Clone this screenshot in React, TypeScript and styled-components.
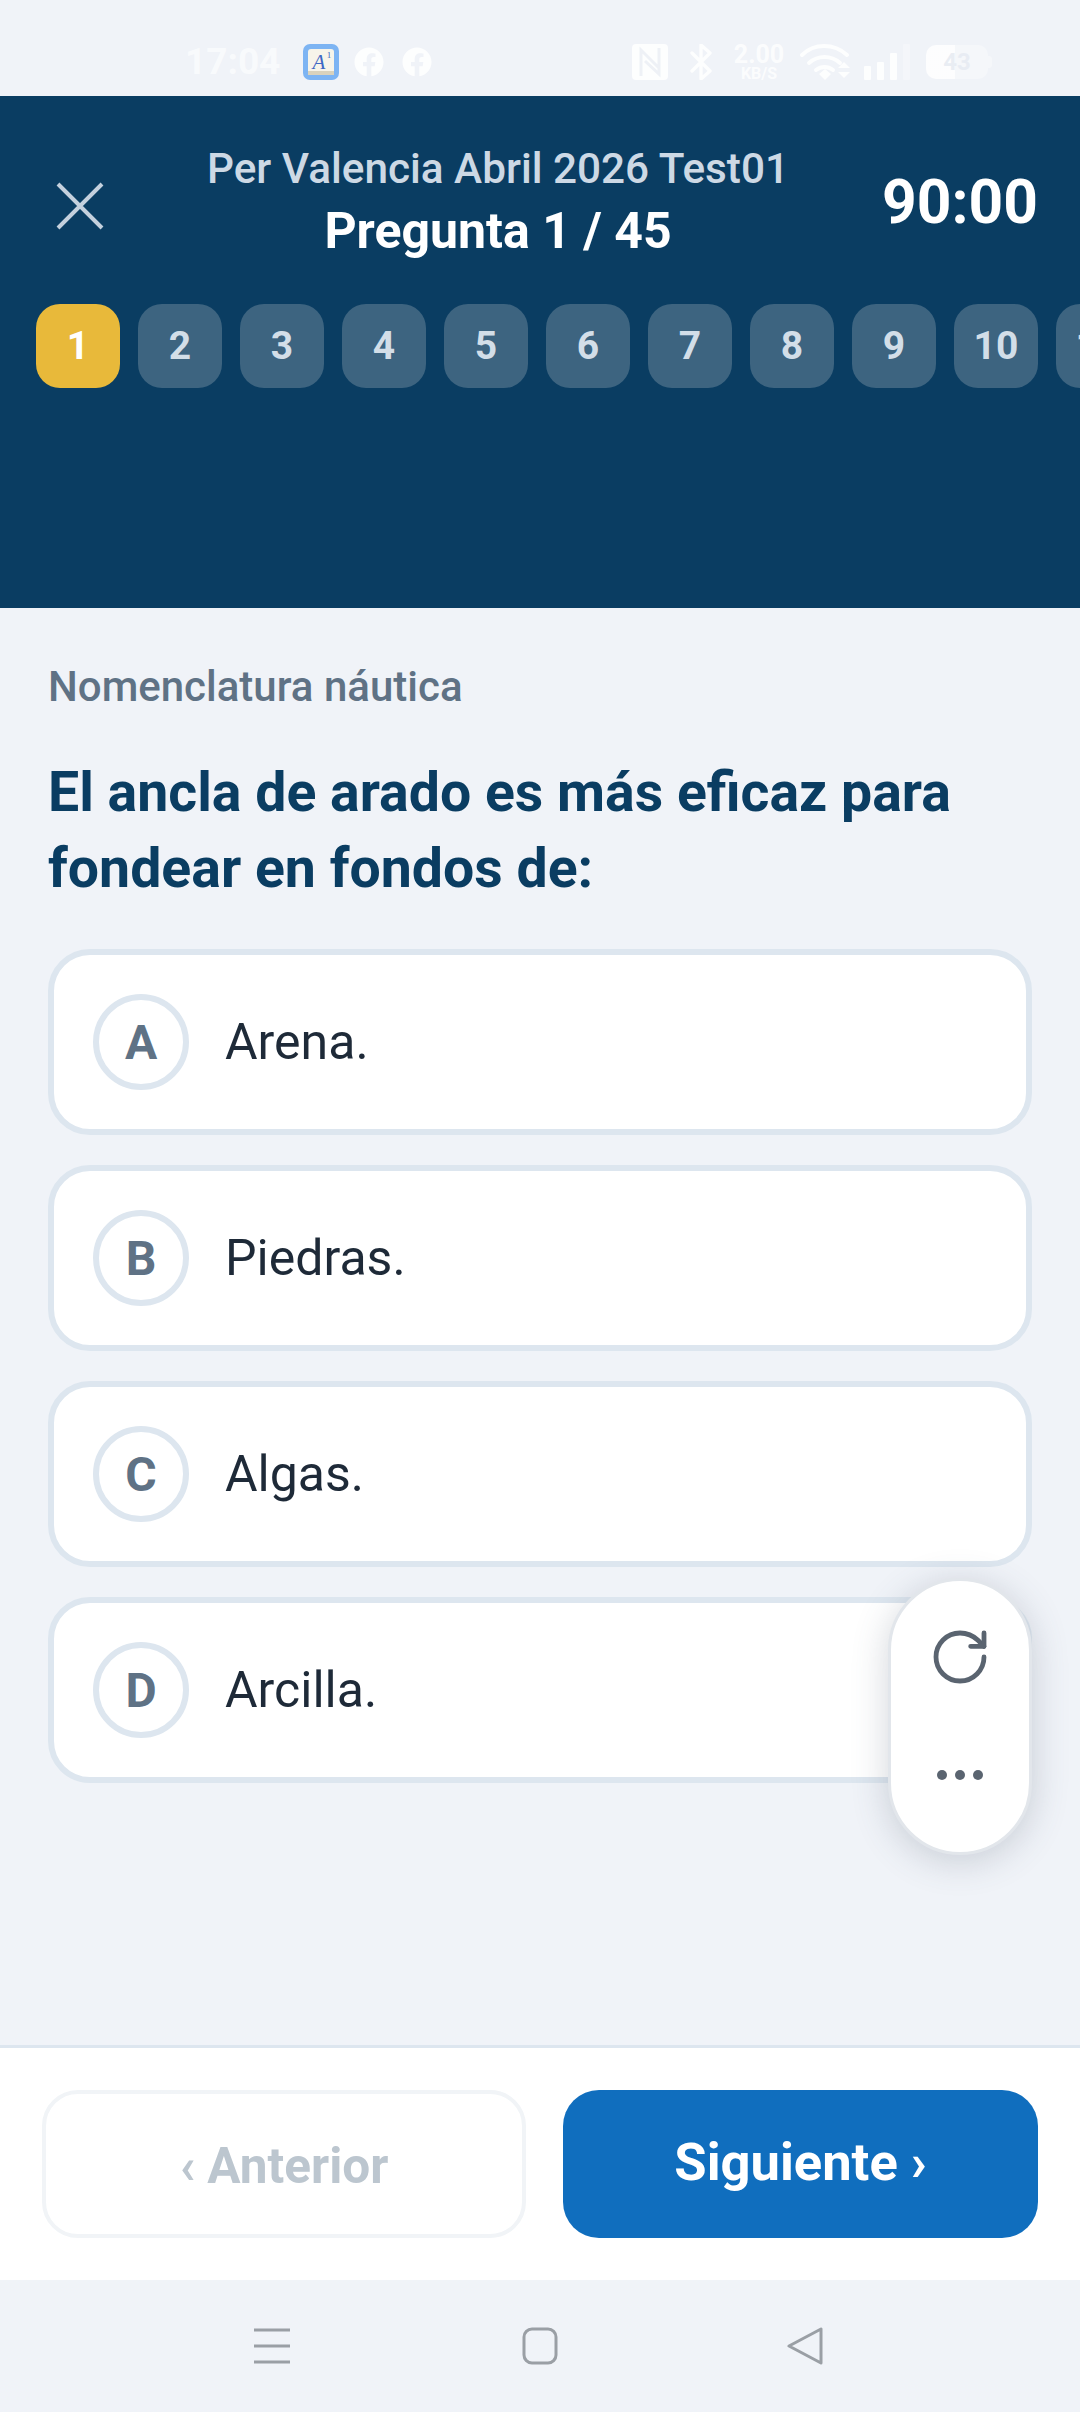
import styled, { createGlobalStyle } from "styled-components";
import { FaFacebook } from "react-icons/fa";
import { RotateCw } from "lucide-react";

const GlobalStyle = createGlobalStyle`
  html, body { margin: 0; padding: 0; background: #f0f3f8; }
  * { box-sizing: border-box; }
  body { font-family: Roboto, "Liberation Sans", sans-serif; }
`;

const Screen = styled.div`
  width: 1080px;
  height: 2412px;
  display: flex;
  flex-direction: column;
  background: #f0f3f8;
  overflow: hidden;
`;

/* status bar */
const StatusBar = styled.div`
  height: 96px;
  flex: none;
  display: flex;
  align-items: center;
  padding: 27px 0 0 185px;
  color: rgba(255, 255, 255, 0.75);
`;
const Time = styled.span`
  font-size: 37px;
  font-weight: 700;
  width: 118px;
  color: rgba(255, 255, 255, 0.62);
`;
const AppIcon = styled.svg`
  width: 36px;
  height: 36px;
  margin-right: 15px;
`;
const FbIcon = styled(FaFacebook)`
  width: 30px;
  height: 30px;
  margin-right: 18px;
  color: rgba(255, 255, 255, 0.85);
`;
const RightIcons = styled.div`
  display: flex;
  align-items: center;
  margin-left: 182px;
`;
const NfcIcon = styled.svg`
  width: 36px;
  height: 36px;
  margin-right: 22px;
`;
const BtIcon = styled.svg`
  width: 22px;
  height: 36px;
  margin-right: 18px;
`;
const Speed = styled.div`
  width: 58px;
  margin-right: 12px;
  display: flex;
  flex-direction: column;
  align-items: center;
  font-weight: 700;
  color: rgba(255, 255, 255, 0.8);
`;
const SpeedValue = styled.span`
  font-size: 25px;
  line-height: 23px;
`;
const SpeedUnit = styled.span`
  font-size: 16px;
  line-height: 15px;
`;
const WifiIcon = styled.svg`
  width: 52px;
  height: 38px;
  margin-right: 12px;
`;
const SignalIcon = styled.svg`
  width: 46px;
  height: 36px;
  margin-right: 16px;
`;
const BatteryIcon = styled.div`
  position: relative;
  width: 62px;
  height: 34px;
  border-radius: 10px;
  background: linear-gradient(90deg, rgba(255, 255, 255, 0.85) 46%, rgba(255, 255, 255, 0.35) 46%);
  display: flex;
  align-items: center;
  justify-content: center;
  font-size: 24px;
  font-weight: 700;
  color: rgba(232, 236, 243, 0.95);
`;
const BatteryTip = styled.span`
  position: absolute;
  right: -4px;
  top: 11px;
  width: 4px;
  height: 12px;
  border-radius: 0 3px 3px 0;
  background: rgba(255, 255, 255, 0.35);
`;

/* header */
const Header = styled.header`
  height: 512px;
  flex: none;
  background: #0a3d62;
  padding-top: 48px;
`;
const TopRow = styled.div`
  display: flex;
  align-items: flex-start;
  height: 160px;
`;
const CloseButton = styled.div`
  width: 160px;
  padding: 37px 0 0 55px;
  color: #c4d1de;
  flex: none;
`;
const Titles = styled.div`
  width: 676px;
  flex: none;
  text-align: center;
`;
const ExamName = styled.div`
  font-size: 42.3px;
  font-weight: 500;
  line-height: 50px;
  color: #cdd9e5;
`;
const Progress = styled.div`
  font-size: 50px;
  font-weight: 700;
  line-height: 58px;
  margin-top: 8px;
  color: #fff;
`;
const Countdown = styled.div`
  font-size: 60.5px;
  font-weight: 700;
  line-height: 70px;
  margin: 24px 0 0 46px;
  color: #fff;
`;
const Chips = styled.div`
  display: flex;
  gap: 18px;
  padding-left: 36px;
`;
const Chip = styled.div<{ $active?: boolean }>`
  width: 84px;
  height: 84px;
  flex: none;
  border-radius: 24px;
  display: flex;
  align-items: center;
  justify-content: center;
  font-size: 39px;
  font-weight: 700;
  background: ${(p) => (p.$active ? "#e8b93a" : "#3d6480")};
  color: ${(p) => (p.$active ? "#fff" : "#d3dee8")};
`;

/* question */
const Body = styled.main`
  flex: 1;
  position: relative;
  padding: 56px 48px 0;
`;
const Category = styled.div`
  font-size: 42px;
  font-weight: 500;
  line-height: 46px;
  color: #5f7285;
`;
const Question = styled.h1`
  margin: 45px 0 0;
  font-size: 55.4px;
  font-weight: 700;
  line-height: 76px;
  color: #0a3d62;
`;
const Options = styled.div`
  display: flex;
  flex-direction: column;
  gap: 30px;
  margin-top: 42px;
`;
const Option = styled.div`
  height: 186px;
  display: flex;
  align-items: center;
  gap: 36px;
  padding-left: 39px;
  background: #fff;
  border: 6px solid #dde6ef;
  border-radius: 42px;
`;
const Letter = styled.div`
  width: 96px;
  height: 96px;
  flex: none;
  border-radius: 50%;
  border: 6px solid #dde6ef;
  display: flex;
  align-items: center;
  justify-content: center;
  font-size: 48px;
  font-weight: 700;
  color: #5f7285;
`;
const OptionText = styled.span`
  font-size: 50px;
  color: #1e2a38;
`;
const FloatingPill = styled.div`
  position: absolute;
  left: 888px;
  top: 970px;
  width: 144px;
  height: 277px;
  border-radius: 72px;
  background: #fff;
  border: 3px solid #e2e6eb;
  box-shadow: 0 6px 36px rgba(70, 85, 105, 0.24);
  display: flex;
  flex-direction: column;
  align-items: center;
  color: #5a6470;
  padding-top: 44px;
`;
const Dots = styled.div`
  display: flex;
  gap: 8px;
  margin-top: 81px;
`;
const Dot = styled.span`
  width: 10px;
  height: 10px;
  border-radius: 50%;
  background: #5a6470;
`;

/* bottom actions */
const Footer = styled.footer`
  height: 235px;
  flex: none;
  background: #fff;
  border-top: 3px solid #dde6ef;
  display: flex;
  gap: 37px;
  padding: 42px 42px 0 42px;
`;
const BackButton = styled.div`
  width: 484px;
  height: 148px;
  border: 4px solid #f1f4f7;
  border-radius: 36px;
  background: #fff;
  display: flex;
  align-items: center;
  justify-content: center;
  font-size: 49.5px;
  font-weight: 700;
  color: #bcc6cf;
  padding-top: 3px;
`;
const NextButton = styled.div`
  width: 475px;
  height: 148px;
  border-radius: 36px;
  background: #106ebe;
  display: flex;
  align-items: center;
  justify-content: center;
  font-size: 52.5px;
  font-weight: 700;
  color: #fff;
  padding-bottom: 4px;
`;

/* system nav */
const NavBar = styled.nav`
  height: 132px;
  flex: none;
  display: flex;
  align-items: center;
  padding: 0 0 0 254px;
`;
const NavIcon = styled.svg<{ $gap?: number }>`
  width: 36px;
  height: 38px;
  margin-right: ${(p) => p.$gap ?? 0}px;
`;

export default function App(): JSX.Element {
  const numbers = [2, 3, 4, 5, 6, 7, 8, 9, 10, 11];
  return (
    <Screen>
      <GlobalStyle />
      <StatusBar>
        <Time>17:04</Time>
        <AppIcon viewBox="0 0 36 36">
          <rect width="36" height="36" rx="7" fill="#7db4f3" />
          <rect x="5" y="5" width="26" height="26" rx="3" fill="#f7f4ea" />
          <rect x="5" y="27" width="26" height="4" fill="#d9d2bd" />
          <text x="16" y="25" textAnchor="middle" fontSize="21" fontStyle="italic" fontFamily="Liberation Serif, serif" fill="#3f68c4">
            A
          </text>
          <text x="26" y="14" textAnchor="middle" fontSize="9" fontFamily="Liberation Serif, serif" fill="#3f68c4">
            1
          </text>
        </AppIcon>
        <FbIcon />
        <FbIcon />
        <RightIcons>
          <NfcIcon viewBox="0 0 36 36">
            <rect width="36" height="36" rx="4" fill="rgba(255,255,255,.85)" />
            <path d="M9 32V6l18 18M27 4v26L13 17" fill="none" stroke="#eef1f6" strokeWidth="3" />
          </NfcIcon>
          <BtIcon viewBox="0 0 22 36">
            <path d="M2 9l18 18-9 8V1l9 8L2 27" fill="none" stroke="rgba(255,255,255,.85)" strokeWidth="3.4" strokeLinejoin="round" strokeLinecap="round" />
          </BtIcon>
          <Speed>
            <SpeedValue>2.00</SpeedValue>
            <SpeedUnit>KB/S</SpeedUnit>
          </Speed>
          <WifiIcon viewBox="0 0 52 38">
            <g fill="none" stroke="rgba(255,255,255,.85)" strokeWidth="4" strokeLinecap="round">
              <path d="M2 12C14 0 34 0 47 12" />
              <path d="M9 20c9-8 22-8 31 0" />
              <path d="M16 27c5-4 12-4 17 0" />
            </g>
            <path d="M19 31l6-5 6 5-6 6zM38 25l6-6 6 6zM38 29h12l-6 6z" fill="rgba(255,255,255,.85)" />
          </WifiIcon>
          <SignalIcon viewBox="0 0 46 36">
            <rect x="0" y="22" width="7" height="14" rx="1" fill="rgba(255,255,255,.85)" />
            <rect x="13" y="18" width="7" height="18" rx="1" fill="rgba(255,255,255,.85)" />
            <rect x="26" y="9" width="7" height="27" rx="1" fill="rgba(255,255,255,.85)" />
            <rect x="39" y="0" width="7" height="36" rx="1" fill="rgba(255,255,255,.3)" />
          </SignalIcon>
          <BatteryIcon>
            43
            <BatteryTip />
          </BatteryIcon>
        </RightIcons>
      </StatusBar>

      <Header>
        <TopRow>
          <CloseButton>
            <svg width="50" height="50" viewBox="0 0 50 50" fill="none" stroke="currentColor" strokeWidth="4">
              <path d="M3 3l44 44M47 3L3 47" />
            </svg>
          </CloseButton>
          <Titles>
            <ExamName>Per Valencia Abril 2026 Test01</ExamName>
            <Progress>Pregunta 1 / 45</Progress>
          </Titles>
          <Countdown>90:00</Countdown>
        </TopRow>
        <Chips>
          <Chip $active>1</Chip>
          {numbers.map((n) => (
            <Chip key={n}>{n}</Chip>
          ))}
        </Chips>
      </Header>

      <Body>
        <Category>Nomenclatura náutica</Category>
        <Question>
          El ancla de arado es más eficaz para
          <br />
          fondear en fondos de:
        </Question>
        <Options>
          {[
            ["A", "Arena."],
            ["B", "Piedras."],
            ["C", "Algas."],
            ["D", "Arcilla."],
          ].map(([letter, text]) => (
            <Option key={letter}>
              <Letter>{letter}</Letter>
              <OptionText>{text}</OptionText>
            </Option>
          ))}
        </Options>
        <FloatingPill>
          <RotateCw size={64} strokeWidth={1.8} />
          <Dots>
            <Dot />
            <Dot />
            <Dot />
          </Dots>
        </FloatingPill>
      </Body>

      <Footer>
        <BackButton>‹ Anterior</BackButton>
        <NextButton>Siguiente ›</NextButton>
      </Footer>

      <NavBar>
        <NavIcon $gap={232} viewBox="0 0 36 38" fill="none" stroke="#9a9fa5" strokeWidth="3">
          <path d="M0 3h36M0 19h36M0 35h36" />
        </NavIcon>
        <NavIcon $gap={229} viewBox="0 0 36 38" fill="none" stroke="#9a9fa5" strokeWidth="3">
          <rect x="2" y="2" width="32" height="34" rx="8" />
        </NavIcon>
        <NavIcon viewBox="0 0 36 38" fill="none" stroke="#9a9fa5" strokeWidth="3" strokeLinejoin="round">
          <path d="M34 2v34L2 19z" />
        </NavIcon>
      </NavBar>
    </Screen>
  );
}
